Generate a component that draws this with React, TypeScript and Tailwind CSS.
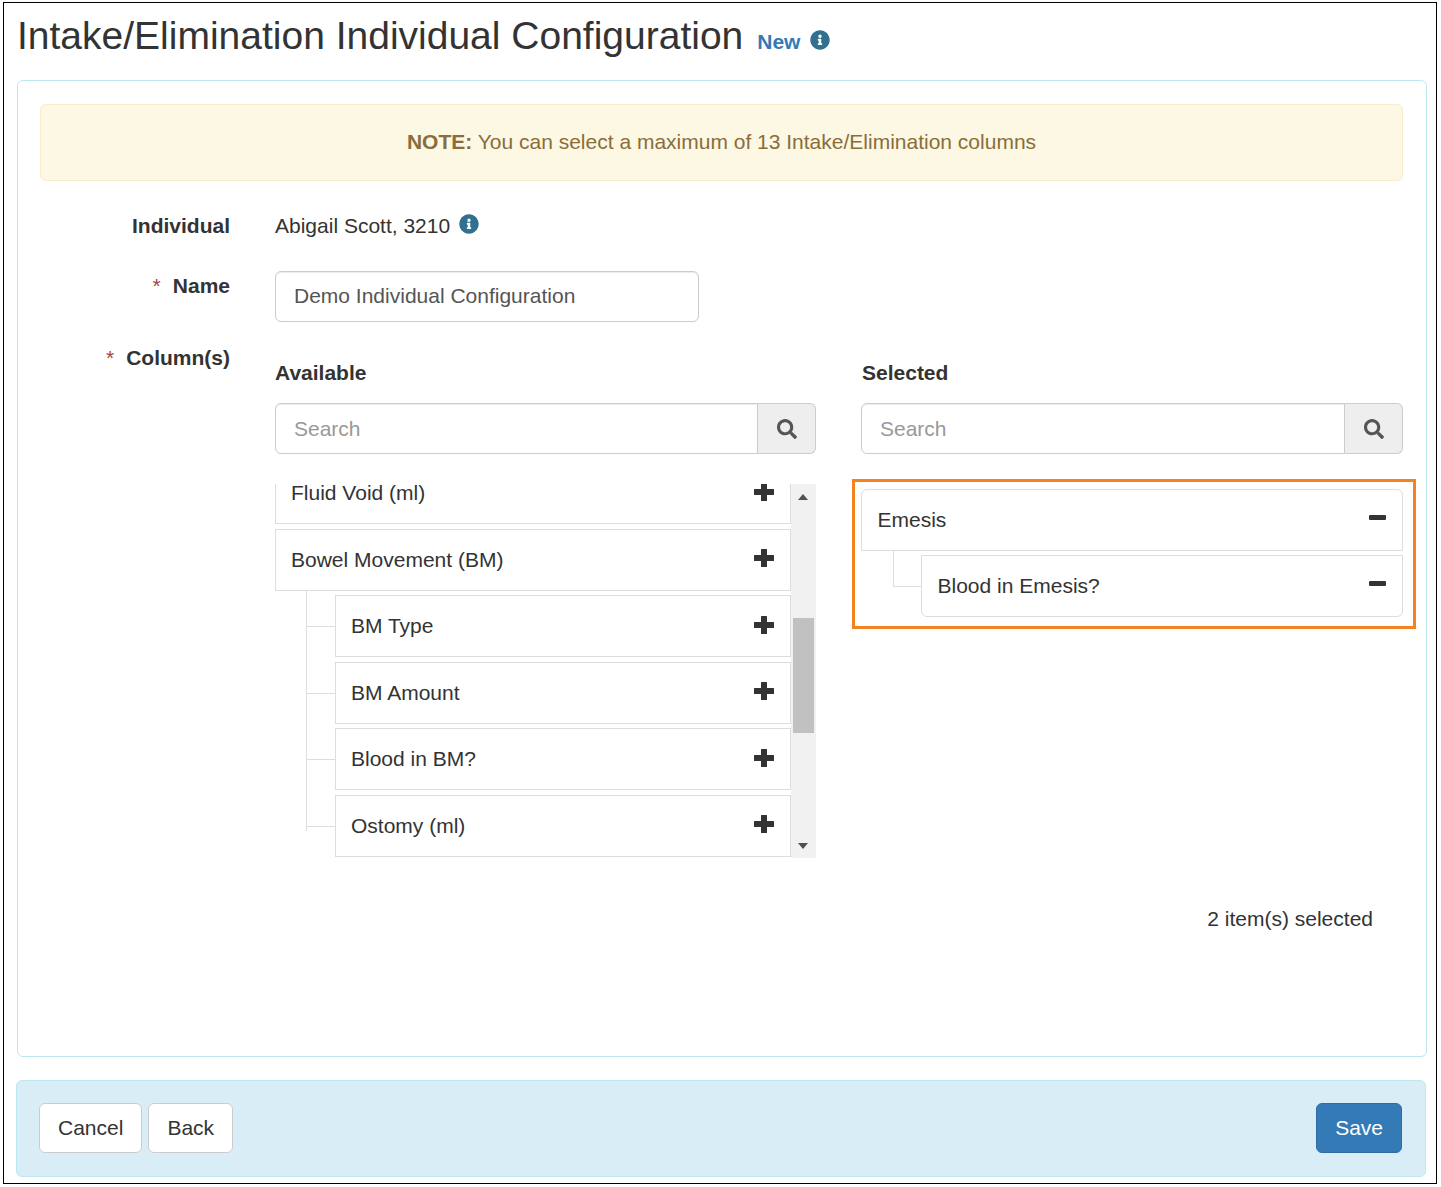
import { FaInfoCircle, FaSearch } from "react-icons/fa";

const PlusIcon = () => (
  <svg viewBox="0 0 20 20" className="w-5 h-5 fill-[#333]">
    <path d="M7.5 1h5a.5.5 0 0 1 .5.5V7h6.500a.5.5 0 0 1 .5.5v5a.5.5 0 0 1-.5.5H13v5.500a.5.5 0 0 1-.5.5h-5a.5.5 0 0 1-.5-.5V13H.5a.5.5 0 0 1-.5-.5v-5A.5.5 0 0 1 .5 7H7V1.500A.5.5 0 0 1 7.500 1z" />
  </svg>
);

const MinusIcon = () => <div className="w-[17px] h-[5px] bg-[#333] rounded-[1px]" />;

const SearchBox = () => (
  <div className="flex h-[51px]">
    <input
      placeholder="Search"
      className="flex-1 min-w-0 h-full border border-[#ccc] rounded-l-[6px] bg-white px-[18px] text-[21px] text-[#555] placeholder:text-[#999] shadow-[inset_0_1px_1px_rgba(0,0,0,0.075)] outline-none"
    />
    <div className="w-[58px] h-full flex items-center justify-center bg-[#eee] border border-l-0 border-[#ccc] rounded-r-[6px]">
      <FaSearch className="w-5 h-5 text-[#555]" />
    </div>
  </div>
);

const ListItem = ({ label }: { label: string }) => (
  <div className="h-[62px] border border-[#ddd] bg-white flex items-center justify-between pl-[15px] pr-[16px] mb-[4.5px]">
    <span className="text-[21px] leading-[18px] text-[#333]">{label}</span>
    <span className="-mt-[3px]">
      <PlusIcon />
    </span>
  </div>
);

const ChildItem = ({ label }: { label: string }) => (
  <div className="relative pl-[60px]">
    {/* tree connector */}
    <div className="absolute left-[31px] w-[29px] top-[31px] h-px bg-[#ddd]" />
    <ListItem label={label} />
  </div>
);

const App = () => {
  const children = ["BM Type", "BM Amount", "Blood in BM?", "Ostomy (ml)"];

  return (
    <div className="w-[1441px] h-[1187px] bg-white pt-[2px] pl-[3px] font-['Liberation_Sans',Arial,sans-serif] text-[#333]">
      <div className="w-[1434px] h-[1182px] border border-black pl-[12px] pr-[8px]">
        {/* Header */}
        <div className="h-[77px] flex items-start">
          <h1 className="text-[39px] leading-[44px] mt-[11px] ml-px text-[#333] whitespace-nowrap">
            Intake/Elimination Individual Configuration
          </h1>
          <span className="ml-[14px] mt-[26px] text-[21px] leading-[26px] font-bold text-[#337ab7]">New</span>
          <FaInfoCircle className="ml-[10px] mt-[27px] w-[20px] h-[20px] text-[#31708f]" />
        </div>

        {/* Main panel */}
        <div className="ml-px w-[1410px] h-[977px] border border-[#bce8f1] rounded-[6px] bg-white pt-[23px] pl-[22px] pr-[23px]">
          <div className="h-[77px] pb-[2px] bg-[#fcf8e3] border border-[#faebcc] rounded-[6px] flex items-center justify-center text-[21px] text-[#8a6d3b]">
            <span>
              <b>NOTE:</b> You can select a maximum of 13 Intake/Elimination columns
            </span>
          </div>

          <div className="grid grid-cols-[190px_1fr] gap-x-[45px] mt-[30px]">
            <label className="text-right font-bold text-[21px] leading-[30px]">Individual</label>
            <div className="flex items-start h-[60px] text-[21px] leading-[30px]">
              Abigail Scott, 3210
              <FaInfoCircle className="ml-[9px] mt-[3px] w-[20px] h-[20px] text-[#31708f]" />
            </div>

            <label className="text-right font-bold text-[21px] leading-[30px]">
              <span className="text-[#a94442] font-normal mr-[12px]">*</span>Name
            </label>
            <div className="h-[72px]">
              <input
                defaultValue="Demo Individual Configuration"
                className="w-[424px] h-[51px] pb-[2px] border border-[#ccc] rounded-[6px] px-[18px] text-[21px] text-[#555] shadow-[inset_0_1px_1px_rgba(0,0,0,0.075)] outline-none"
              />
            </div>

            <label className="text-right font-bold text-[21px] leading-[30px]">
              <span className="text-[#a94442] font-normal mr-[12px]">*</span>Column(s)
            </label>
            <div className="grid grid-cols-[541px_542px] gap-x-[45px] pt-[6px]">
              {/* Available */}
              <div>
                <div className="font-bold text-[21px] leading-[30px] mt-[9px] mb-[15px]">Available</div>
                <SearchBox />
                <div className="flex h-[374px] mt-[30px] overflow-hidden">
                  <div className="w-[516px] overflow-hidden">
                    <div className="-mt-[21.7px]">
                      <ListItem label="Fluid Void (ml)" />
                      <div className="relative">
                        <div className="absolute left-[31px] top-[62px] w-px h-[240px] bg-[#ddd]" />
                        <ListItem label="Bowel Movement (BM)" />
                        {children.map((c) => (
                          <ChildItem key={c} label={c} />
                        ))}
                      </div>
                    </div>
                  </div>
                  {/* Scrollbar */}
                  <div className="relative w-[25px] bg-[#f1f1f1]">
                    <div className="absolute left-[6.500px] top-[10px] w-0 h-0 border-x-[5.500px] border-x-transparent border-b-[6px] border-b-[#505050]" />
                    <div className="absolute left-[2px] top-[134px] w-[21px] h-[115px] bg-[#c1c1c1]" />
                    <div className="absolute left-[6.500px] bottom-[9px] w-0 h-0 border-x-[5.500px] border-x-transparent border-t-[6px] border-t-[#505050]" />
                  </div>
                </div>
              </div>

              {/* Selected */}
              <div>
                <div className="font-bold text-[21px] leading-[30px] mt-[9px] mb-[15px] ml-px">Selected</div>
                <SearchBox />
                <div className="-ml-[9px] -mr-[13px] mt-[25px] h-[150px] border-[3px] border-[#f58220] pt-[7px] pl-[6px] pr-[10px]">
                  <div className="h-[62px] border border-[#ddd] rounded-t-[6px] flex items-center justify-between pl-[15.500px] pr-[16px]">
                    <span className="text-[21px] text-[#333]">Emesis</span>
                    <span className="-mt-[5px]">
                      <MinusIcon />
                    </span>
                  </div>
                  <div className="relative pl-[60px] mt-[4px]">
                    <div className="absolute left-[32px] -top-[4px] w-[28px] h-[36px] border-l border-b border-[#ddd]" />
                    <div className="h-[62px] border border-[#ddd] rounded-b-[6px] flex items-center justify-between pl-[15.500px] pr-[16px]">
                      <span className="text-[21px] text-[#333]">Blood in Emesis?</span>
                      <span className="-mt-[5px]">
                        <MinusIcon />
                      </span>
                    </div>
                  </div>
                </div>
                <div className="text-right text-[21px] leading-[30px] mt-[275px] pr-[30px]">2 item(s) selected</div>
              </div>
            </div>
          </div>
        </div>

        {/* Footer */}
        <div className="mt-[23px] w-[1410px] h-[97px] bg-[#d9edf7] border border-[#bce8f1] rounded-[6px] flex items-center justify-between pl-[22px] pr-[23px] pb-[2px]">
          <div className="flex gap-[6px]">
            <button className="h-[50px] px-[18px] bg-white border border-[#ccc] rounded-[6px] text-[21px] text-[#333]">Cancel</button>
            <button className="h-[50px] px-[18px] bg-white border border-[#ccc] rounded-[6px] text-[21px] text-[#333]">Back</button>
          </div>
          <button className="h-[50px] px-[18px] bg-[#337ab7] border border-[#2e6da4] rounded-[6px] text-[21px] text-white">Save</button>
        </div>
      </div>
    </div>
  );
};

export default App;
